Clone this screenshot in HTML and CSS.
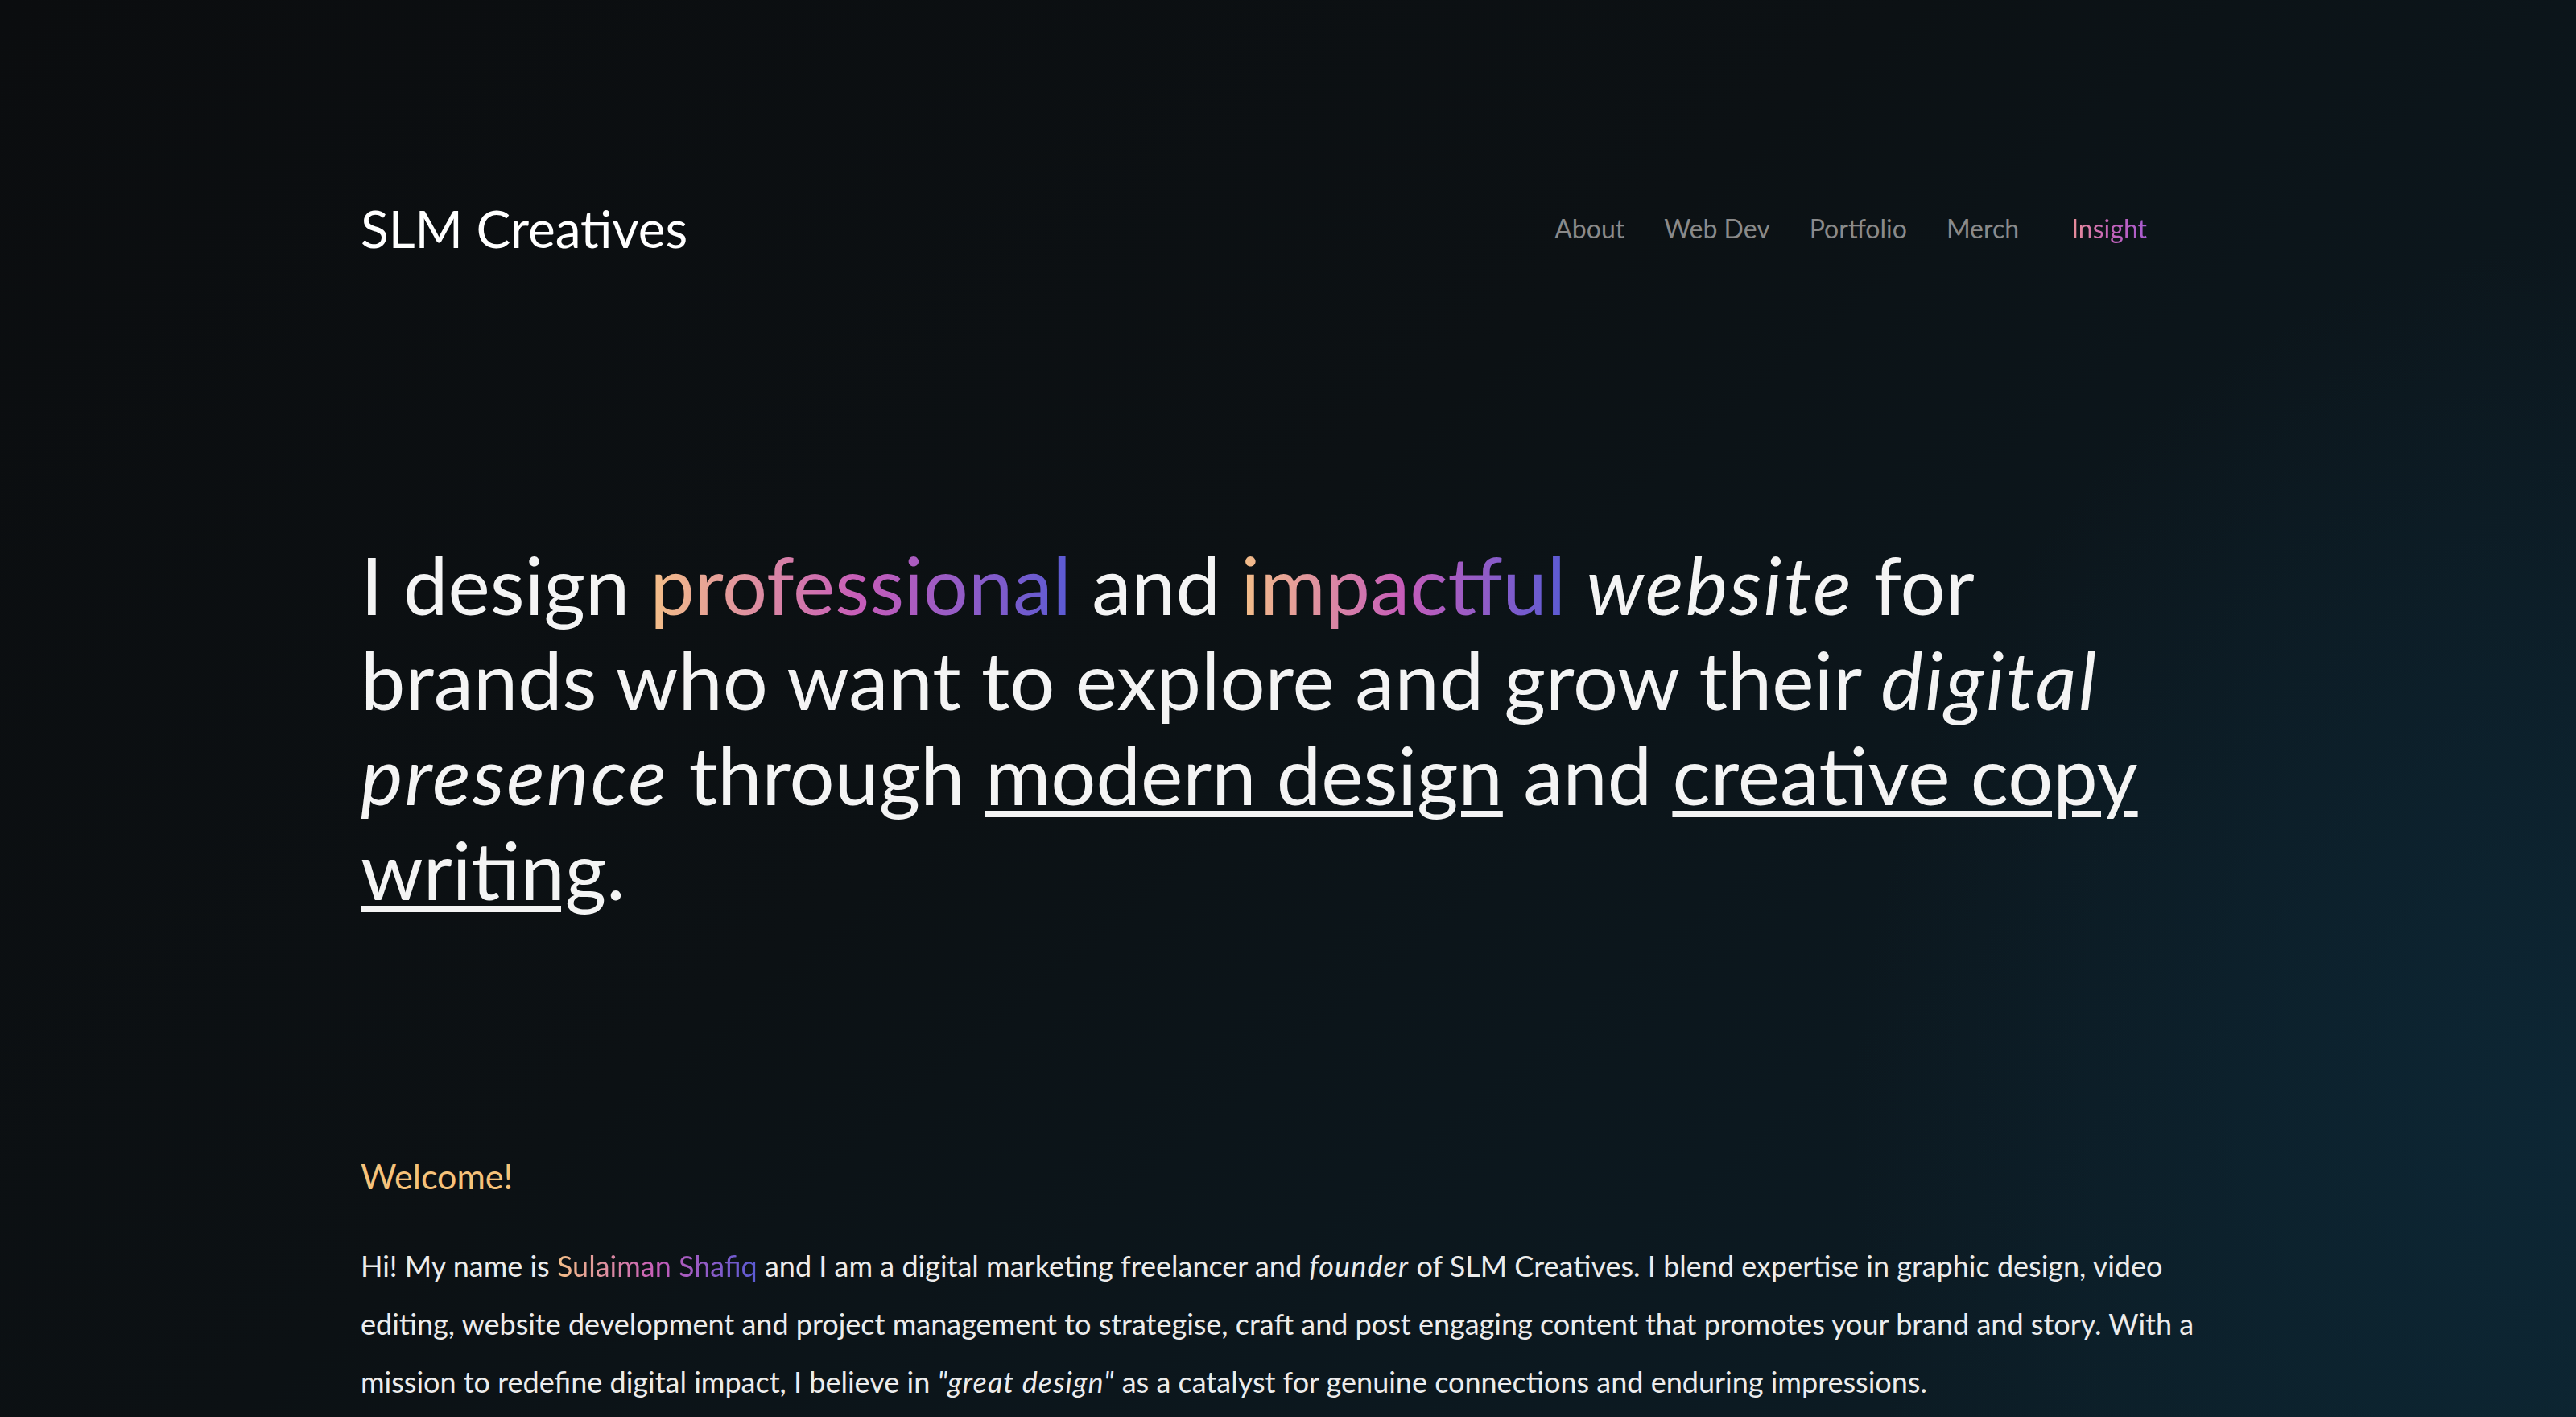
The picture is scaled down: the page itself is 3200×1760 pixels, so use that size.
FILE: index.html
```html
<!DOCTYPE html>
<html lang="en">
<head>
<meta charset="utf-8">
<title>SLM Creatives</title>
<link rel="stylesheet" href="styles.css">
</head>
<body>
<div class="page">
  <header class="header">
    <div class="logo">SLM Creatives</div>
    <nav class="nav">
      <a class="nav-link" href="#">About</a>
      <a class="nav-link" href="#">Web Dev</a>
      <a class="nav-link" href="#">Portfolio</a>
      <a class="nav-link" href="#">Merch</a>
      <a class="nav-link nav-active" href="#">Insight</a>
    </nav>
  </header>
  <main>
    <h1 class="hero">I design <span class="grad">professional</span> and <span class="grad">impactful</span> <em>website</em> for brands who want to explore and grow their <em>digital presence</em> through <span class="ul">modern design</span> and <span class="ul">creative copy writing</span>.</h1>
    <h2 class="welcome">Welcome!</h2>
    <p class="intro">Hi! My name is <span class="grad">Sulaiman Shafiq</span> and I am a digital marketing freelancer and <em>founder</em> of SLM Creatives. I blend expertise in graphic design, video editing, website development and project management to strategise, craft and post engaging content that promotes your brand and story. With a mission to redefine digital impact, I believe in <em>"great design"</em> as a catalyst for genuine connections and enduring impressions.</p>
  </main>
</div>
</body>
</html>
```

FILE: styles.css
```css
html, body {
  margin: 0;
  padding: 0;
}
body {
  min-height: 1760px;
  font-family: "Lato", "Noto Sans", sans-serif;
  color: #f2f2f2;
  background:
    radial-gradient(ellipse 900px 1100px at 100% 80%, rgba(13, 40, 55, 0.85) 0%, rgba(13, 40, 55, 0) 100%),
    linear-gradient(140deg, #0b0d0f 0%, #0c1114 45%, #0c1a22 80%, #0c2029 100%);
}
.page {
  width: 2304px;
  margin: 0 auto;
  padding-top: 246px;
}
.header {
  display: flex;
  justify-content: space-between;
  align-items: center;
}
.logo {
  font-size: 64px;
  line-height: 1.2;
  font-weight: 400;
  color: #ffffff;
}
.nav {
  display: flex;
  gap: 49px;
  margin-right: 85px;
}
.nav-link {
  font-size: 32px;
  line-height: 1.2;
  color: #8a8a8a;
  text-decoration: none;
}
.nav-active {
  margin-left: 16px;
  background: linear-gradient(90deg, #e98f98 0%, #c463b8 50%, #a95cd0 100%);
  -webkit-background-clip: text;
  background-clip: text;
  color: transparent;
}
.grad {
  background: linear-gradient(90deg, #f4bf88 0%, #c65cb9 50%, #5a5bd4 100%);
  -webkit-background-clip: text;
  background-clip: text;
  color: transparent;
}
.hero {
  margin: 344px 0 0 0;
  font-size: 99px;
  line-height: 118px;
  font-weight: 400;
  color: #f4f4f4;
}
.hero em {
  font-style: italic;
  letter-spacing: 0.025em;
}
.ul {
  text-decoration: underline;
  text-decoration-thickness: 8px;
  text-underline-offset: 7px;
}
.welcome {
  margin: 296px 0 0 0;
  font-size: 43px;
  line-height: 1.2;
  font-weight: 400;
  color: #f6c27a;
}
.intro {
  margin: 50px 0 0 0;
  font-size: 36px;
  line-height: 72px;
  color: #ececec;
}
.intro em {
  font-style: italic;
  letter-spacing: 0.03em;
}
```
